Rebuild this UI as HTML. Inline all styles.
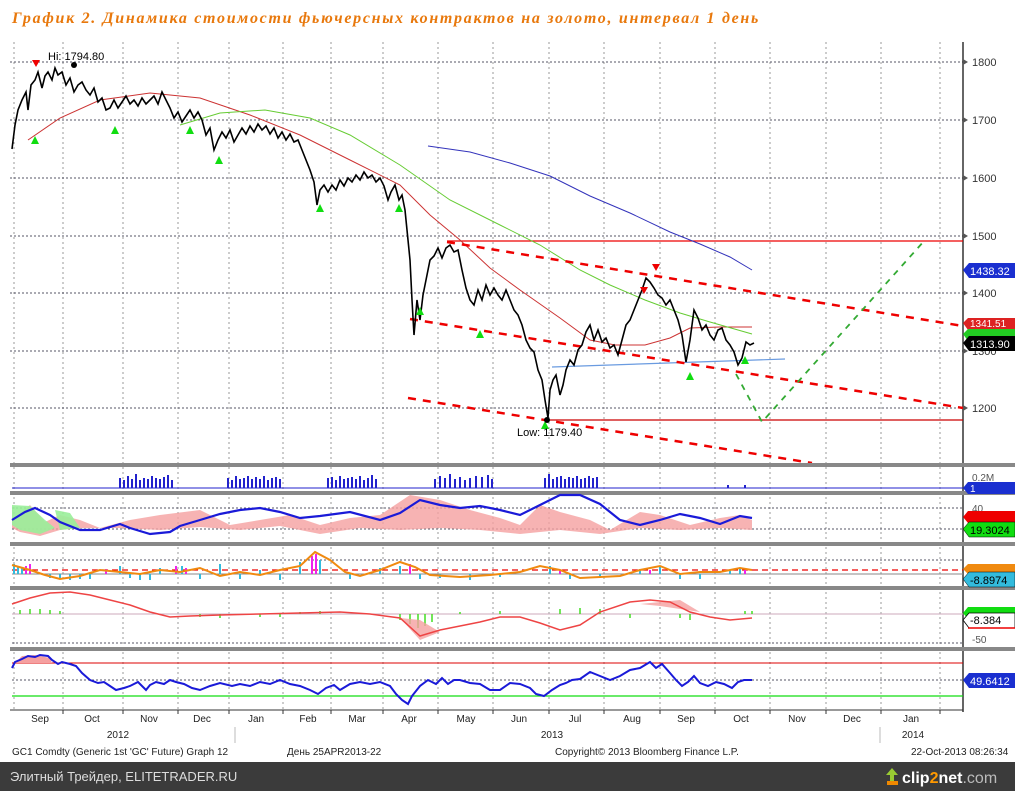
<!DOCTYPE html>
<html><head><meta charset="utf-8"><style>
html,body{margin:0;padding:0;background:#fff;}
svg{display:block;font-family:"Liberation Sans",sans-serif;}
</style></head><body>
<svg width="1015" height="791" viewBox="0 0 1015 791" xmlns="http://www.w3.org/2000/svg">
<rect width="1015" height="791" fill="#fff"/>
<text x="12" y="23" font-family="Liberation Serif,serif" font-style="italic" font-weight="bold" font-size="16" letter-spacing="1.7" fill="#e8780c">График 2.   Динамика стоимости фьючерсных контрактов на золото, интервал 1 день</text>

<g stroke="#999" stroke-dasharray="2,3" stroke-width="1">
<line x1="14" y1="42" x2="14" y2="710"/><line x1="63" y1="42" x2="63" y2="710"/><line x1="123" y1="42" x2="123" y2="710"/><line x1="178" y1="42" x2="178" y2="710"/><line x1="229" y1="42" x2="229" y2="710"/><line x1="283" y1="42" x2="283" y2="710"/><line x1="331" y1="42" x2="331" y2="710"/><line x1="383" y1="42" x2="383" y2="710"/><line x1="438" y1="42" x2="438" y2="710"/><line x1="493" y1="42" x2="493" y2="710"/><line x1="549" y1="42" x2="549" y2="710"/><line x1="604" y1="42" x2="604" y2="710"/><line x1="660" y1="42" x2="660" y2="710"/><line x1="715" y1="42" x2="715" y2="710"/><line x1="770" y1="42" x2="770" y2="710"/><line x1="826" y1="42" x2="826" y2="710"/><line x1="881" y1="42" x2="881" y2="710"/><line x1="940" y1="42" x2="940" y2="710"/>
</g>
<g stroke="#556" stroke-dasharray="2,2" stroke-width="1">
<line x1="10" y1="62" x2="963" y2="62"/><line x1="10" y1="120" x2="963" y2="120"/><line x1="10" y1="178" x2="963" y2="178"/><line x1="10" y1="236" x2="963" y2="236"/><line x1="10" y1="293" x2="963" y2="293"/><line x1="10" y1="351" x2="963" y2="351"/><line x1="10" y1="408" x2="963" y2="408"/>
</g>
<line x1="963" y1="42" x2="963" y2="712" stroke="#333" stroke-width="1.5"/>
<g font-size="11" fill="#333">
<text x="972" y="66">1800</text><text x="972" y="124">1700</text><text x="972" y="182">1600</text><text x="972" y="240">1500</text><text x="972" y="297">1400</text><text x="972" y="355">1300</text><text x="972" y="412">1200</text>
</g>
<g fill="#555"><path d="M963,59l5,3l-5,3z"/><path d="M963,117l5,3l-5,3z"/><path d="M963,175l5,3l-5,3z"/><path d="M963,233l5,3l-5,3z"/><path d="M963,290l5,3l-5,3z"/><path d="M963,348l5,3l-5,3z"/><path d="M963,405l5,3l-5,3z"/></g>

<line x1="447" y1="241" x2="963" y2="241" stroke="#e00" stroke-width="1.2"/>
<line x1="545" y1="420" x2="963" y2="420" stroke="#c00" stroke-width="1.2"/>
<polyline fill="none" stroke="#c33" stroke-width="1" points="28,140 60,118 100,100 150,93 200,98 250,115 300,135 350,160 400,185 430,215 460,240 490,268 520,290 560,318 590,340 615,345 645,345 670,338 690,328 720,327 752,327"/>
<polyline fill="none" stroke="#6c3" stroke-width="1" points="180,125 220,113 265,110 310,118 350,135 400,165 450,200 500,225 540,245 580,270 610,285 645,300 680,313 710,322 752,334"/>
<polyline fill="none" stroke="#33b" stroke-width="1" points="428,146 470,152 510,163 550,176 590,196 630,213 670,232 700,244 730,257 752,270"/>
<line x1="552" y1="367" x2="785" y2="359" stroke="#6a9be0" stroke-width="1.2"/>
<g stroke="#e00" stroke-width="2.5" stroke-dasharray="8,7" fill="none">
<line x1="447" y1="242" x2="963" y2="326"/>
<line x1="410" y1="319" x2="963" y2="408"/>
<line x1="408" y1="398" x2="812" y2="463"/>
</g>
<polyline fill="none" stroke="#3a3" stroke-width="1.8" stroke-dasharray="6,6" points="736,374 762,422 925,240"/>

<polyline fill="none" stroke="#000" stroke-width="1.6" points="12,149 15,125 18,110 22,100 26,92 28,110 31,85 35,80 38,72 42,88 45,76 48,72 52,80 55,68 58,75 62,72 66,85 70,78 74,92 78,85 82,82 86,90 90,95 94,88 98,102 102,98 106,110 110,108 114,100 118,108 122,102 126,96 130,104 134,100 138,106 142,98 146,104 150,100 154,96 158,104 162,92 166,100 170,108 174,118 178,112 182,122 186,116 190,110 194,118 198,112 202,120 206,135 210,128 214,150 218,140 222,132 226,138 230,130 234,142 238,135 242,128 246,134 250,126 254,132 258,124 262,130 266,126 270,134 274,128 278,138 282,132 286,140 290,134 294,142 298,140 302,150 306,160 310,170 314,182 317,205 320,190 324,185 328,192 332,185 336,190 340,180 344,186 348,178 352,182 356,175 360,180 364,172 368,178 372,175 376,182 380,178 384,186 388,200 391,192 395,185 399,200 402,195 405,210 408,240 410,260 412,300 414,335 417,300 420,320 423,295 426,280 430,260 434,256 438,248 442,258 446,248 450,245 454,252 458,250 462,270 466,288 470,300 474,305 478,290 482,300 486,285 490,295 494,288 498,295 502,300 506,290 510,300 514,310 518,315 522,325 526,340 530,348 534,352 538,370 542,380 545,400 548,418 550,390 553,380 556,375 560,395 563,385 566,370 570,360 574,365 578,350 582,345 586,332 590,325 594,340 598,330 602,342 606,338 610,348 614,345 618,355 622,340 626,325 630,320 634,310 638,300 642,290 646,278 650,282 654,288 658,295 662,298 666,305 670,300 674,310 678,320 682,335 686,362 690,340 694,310 698,318 702,330 706,325 710,335 714,340 718,330 722,328 726,340 730,345 734,352 738,365 742,358 746,342 750,345 754,343"/>
<g fill="#1d1">
<path d="M35,136l4,8h-8z"/><path d="M115,126l4,8h-8z"/><path d="M190,126l4,8h-8z"/><path d="M219,156l4,8h-8z"/><path d="M320,204l4,8h-8z"/><path d="M399,204l4,8h-8z"/><path d="M420,307l4,8h-8z"/><path d="M480,330l4,8h-8z"/><path d="M545,421l4,8h-8z"/><path d="M690,372l4,8h-8z"/><path d="M745,356l4,8h-8z"/>
</g>
<g fill="#e00"><path d="M32,60h8l-4,7z"/><path d="M640,287h8l-4,7z"/><path d="M652,264h8l-4,7z"/></g>
<circle cx="547" cy="420" r="3" fill="#000"/><circle cx="74" cy="65" r="3" fill="#000"/>
<text x="48" y="60" font-size="11" fill="#000">Hi: 1794.80</text>
<text x="517" y="436" font-size="11" fill="#000">Low: 1179.40</text>

<path d="M963,270l6,-7h46v15h-46z" fill="#1a2fd0"/><text x="970" y="275" font-size="11" fill="#fff">1438.32</text>
<path d="M963,323l5,-5h47v12h-47z" fill="#d22"/><text x="970" y="327" font-size="10" fill="#fff">1341.51</text>
<path d="M963,334l5,-5h47v12h-47z" fill="#2c2"/>
<path d="M963,343l6,-7h46v15h-46z" fill="#000"/><text x="970" y="348" font-size="11" fill="#fff">1313.90</text>

<g fill="#888">
<rect x="10" y="463" width="1005" height="4"/><rect x="10" y="491" width="1005" height="4"/><rect x="10" y="542" width="1005" height="4"/><rect x="10" y="586" width="1005" height="4"/><rect x="10" y="647" width="1005" height="4"/>
</g>
<line x1="12" y1="488" x2="963" y2="488" stroke="#22c" stroke-width="1"/>
<g stroke="#22c" stroke-width="2">
<path d="M120,488v-10M124,488v-8M128,488v-12M132,488v-9M136,488v-14M140,488v-8M144,488v-10M148,488v-9M152,488v-12M156,488v-10M160,488v-9M164,488v-11M168,488v-13M172,488v-8"/>
<path d="M228,488v-10M232,488v-8M236,488v-12M240,488v-9M244,488v-10M248,488v-12M252,488v-9M256,488v-11M260,488v-9M264,488v-12M268,488v-8M272,488v-10M276,488v-11M280,488v-9"/>
<path d="M328,488v-10M332,488v-11M336,488v-8M340,488v-12M344,488v-9M348,488v-10M352,488v-11M356,488v-9M360,488v-12M364,488v-8M368,488v-10M372,488v-13M376,488v-9"/>
<path d="M435,488v-9M440,488v-12M445,488v-10M450,488v-14M455,488v-9M460,488v-11M465,488v-8M470,488v-10M476,488v-12M482,488v-11M488,488v-13M492,488v-9"/>
<path d="M545,488v-10M549,488v-14M553,488v-9M557,488v-11M561,488v-12M565,488v-9M569,488v-11M573,488v-10M577,488v-12M581,488v-9M585,488v-10M589,488v-12M593,488v-10M597,488v-11"/>
<path d="M728,488v-3M745,488v-3"/>
</g>
<text x="972" y="481" font-size="10" fill="#555">0.2M</text>
<path d="M963,488l5,-6h47v12h-47z" fill="#1a2fd0"/><text x="970" y="492" font-size="10" fill="#fff">1</text>

<g stroke="#556" stroke-dasharray="2,2"><line x1="12" y1="508" x2="963" y2="508"/><line x1="12" y1="529" x2="963" y2="529"/></g>
<path d="M12,520 L30,505 45,522 60,515 80,520 100,528 130,520 160,515 200,510 230,525 260,520 290,515 320,525 350,518 380,515 410,495 440,500 470,510 500,518 520,525 540,505 560,512 590,520 610,530 640,512 660,515 690,525 720,518 740,515 752,520 L752,530 720,528 680,530 640,528 600,534 560,530 520,534 480,530 440,528 400,530 360,528 320,534 280,526 240,530 200,527 160,530 120,528 80,528 60,530 40,536 20,532 12,528Z" fill="#f5a0a0" opacity="0.8"/>
<path d="M12,505 L30,506 45,520 55,528 40,534 20,530 12,525Z M55,510 L70,513 80,528 60,530Z" fill="#9e9" opacity="0.9"/>
<polyline fill="none" stroke="#1a1ad8" stroke-width="2.2" points="12,520 25,512 35,508 50,515 60,522 80,530 100,530 120,524 130,528 150,534 170,532 180,526 200,520 220,514 240,510 260,508 280,512 300,518 320,516 350,512 380,520 400,513 420,500 440,505 460,508 480,506 500,510 520,515 540,505 560,495 580,495 600,504 620,520 640,525 660,520 680,514 700,518 720,524 740,516 752,518"/>
<text x="972" y="512" font-size="10" fill="#555">40</text>
<path d="M963,517l5,-6h47v12h-47z" fill="#e00"/>
<path d="M963,529l6,-7h46v15h-46z" fill="#1d1" stroke="#000" stroke-width=".5"/><text x="970" y="534" font-size="11" fill="#000">19.3024</text>

<g stroke="#556" stroke-dasharray="2,2"><line x1="12" y1="560" x2="963" y2="560"/></g>
<line x1="12" y1="570" x2="963" y2="570" stroke="#e00" stroke-width="1.3" stroke-dasharray="6,4"/>
<line x1="12" y1="574" x2="963" y2="574" stroke="#888" stroke-width="1"/>
<g stroke="#3bd" stroke-width="2">
<path d="M14,574v-10M18,574v-8M22,574v-6M50,574v4M60,574v5M70,574v6M80,574v5M90,574v5M120,574v-8M130,574v4M140,574v6M150,574v6M160,574v-6M182,574v-8M200,574v5M220,574v-10M240,574v5M260,574v-4M280,574v6M300,574v-12M320,574v-14M350,574v5M380,574v-6M400,574v-8M420,574v5M440,574v4M470,574v6M500,574v3M550,574v-8M570,574v5M600,574v4M640,574v-5M660,574v-8M680,574v5M700,574v5M730,574v-4M740,574v-6"/>
</g>
<g stroke="#e2e" stroke-width="2"><path d="M26,574v-8M30,574v-10M106,574v-5M176,574v-8M186,574v-6M312,574v-18M316,574v-20M410,574v-10M560,574v-4M650,574v-4M745,574v-4"/></g>
<polyline fill="none" stroke="#f08a10" stroke-width="2" points="12,565 30,570 45,575 60,579 80,576 100,570 120,572 140,574 160,570 180,572 200,568 220,576 240,572 260,575 280,570 300,566 315,552 330,560 345,572 360,576 380,570 400,562 415,567 430,575 460,577 490,575 520,572 540,566 560,570 580,578 600,577 620,576 640,570 660,566 680,574 700,572 720,572 740,568 752,570"/>
<path d="M963,569l5,-5h47v10h-47z" fill="#f08a10"/>
<path d="M963,579l6,-7h46v15h-46z" fill="#3bd" stroke="#000" stroke-width=".5"/><text x="970" y="584" font-size="11" fill="#000">-8.8974</text>

<line x1="12" y1="614" x2="963" y2="614" stroke="#cab" stroke-width="1"/>
<g stroke="#556" stroke-dasharray="2,2"><line x1="12" y1="643" x2="963" y2="643"/></g>
<g stroke="#4d2" stroke-width="1.5"><path d="M20,614v-4M30,614v-5M40,614v-5M50,614v-4M60,614v-3M200,614v3M220,614v4M260,614v3M280,614v3M300,614v-2M320,614v-3M400,614v6M410,614v10M418,614v14M425,614v12M432,614v8M460,614v-2M500,614v-3M560,614v-5M580,614v-6M600,614v-5M630,614v4M680,614v4M690,614v6M745,614v-3M752,614v-3"/></g>
<path d="M400,618 L420,640 440,632 420,620Z M640,604 L680,600 700,612 660,606Z" fill="#f5a0a0" opacity=".8"/>
<polyline fill="none" stroke="#e44" stroke-width="1.5" points="12,604 30,598 50,593 70,592 90,595 110,600 130,605 150,612 170,617 190,616 220,615 260,614 300,613 340,612 370,614 400,618 420,636 440,630 460,626 480,622 500,617 520,617 540,623 560,630 580,625 600,612 630,602 650,600 670,602 690,612 710,617 730,620 752,618"/>
<path d="M963,613l5,-6h47v12h-47z" fill="#1d1"/>
<path d="M963,620l6,-7h46v15h-46z" fill="#fff" stroke="#000" stroke-width=".8"/><line x1="968" y1="628" x2="1015" y2="628" stroke="#e00" stroke-width="1.5"/><text x="970" y="624" font-size="11" fill="#000">-8.384</text>
<text x="972" y="643" font-size="10" fill="#555">-50</text>

<line x1="12" y1="663" x2="963" y2="663" stroke="#d00" stroke-width="1"/>
<g stroke="#556" stroke-dasharray="2,2"><line x1="12" y1="680" x2="963" y2="680"/></g>
<line x1="12" y1="696" x2="963" y2="696" stroke="#1d1" stroke-width="1.2"/>
<path d="M15,663 L22,656 35,655 50,658 52,663Z" fill="#f5a0a0"/>
<polyline fill="none" stroke="#1a1ad8" stroke-width="2" points="12,668 15,662 22,659 28,656 35,657 40,655 48,656 52,660 58,664 62,662 70,664 76,666 82,673 90,680 98,683 104,682 110,686 116,690 124,688 130,686 138,682 146,690 150,685 156,682 164,684 170,680 176,682 184,684 192,688 200,690 210,686 220,683 232,686 240,684 250,686 260,682 270,684 280,680 290,684 300,686 310,690 318,694 326,688 334,685 340,690 350,684 360,682 370,684 380,682 390,686 396,694 402,700 408,704 412,696 420,686 428,680 436,684 442,678 448,684 454,680 460,680 470,683 480,684 490,690 500,690 510,683 520,684 530,688 536,694 544,696 552,690 560,685 566,683 572,680 580,679 590,672 600,676 610,680 620,676 630,670 640,668 650,662 656,668 662,664 670,673 676,680 682,686 688,682 694,676 700,683 708,686 716,682 724,684 732,688 738,682 744,680 752,680"/>
<path d="M963,680l6,-7h46v15h-46z" fill="#1a2fd0"/><text x="970" y="685" font-size="11" fill="#fff">49.6412</text>

<line x1="10" y1="710" x2="963" y2="710" stroke="#333" stroke-width="1"/>
<g stroke="#333"><path d="M63,710v4M123,710v4M178,710v4M229,710v4M283,710v4M331,710v4M383,710v4M438,710v4M493,710v4M549,710v4M604,710v4M660,710v4M715,710v4M770,710v4M826,710v4M881,710v4M940,710v4"/></g>
<g font-size="10" fill="#222" text-anchor="middle">
<text x="40" y="722">Sep</text><text x="92" y="722">Oct</text><text x="149" y="722">Nov</text><text x="202" y="722">Dec</text><text x="256" y="722">Jan</text><text x="308" y="722">Feb</text><text x="357" y="722">Mar</text><text x="409" y="722">Apr</text><text x="466" y="722">May</text><text x="519" y="722">Jun</text><text x="575" y="722">Jul</text><text x="632" y="722">Aug</text><text x="686" y="722">Sep</text><text x="741" y="722">Oct</text><text x="797" y="722">Nov</text><text x="852" y="722">Dec</text><text x="911" y="722">Jan</text>
<text x="118" y="738">2012</text><text x="552" y="738">2013</text><text x="913" y="738">2014</text>
</g>
<line x1="235" y1="727" x2="235" y2="743" stroke="#bbb"/><line x1="880" y1="727" x2="880" y2="743" stroke="#bbb"/>
<g font-size="10" fill="#222">
<text x="12" y="755">GC1 Comdty (Generic 1st 'GC' Future) Graph 12</text>
<text x="287" y="755">День 25APR2013-22</text>
<text x="555" y="755">Copyright© 2013 Bloomberg Finance L.P.</text>
<text x="911" y="755">22-Oct-2013 08:26:34</text>
</g>

<rect x="0" y="762" width="1015" height="29" fill="#3b3b3b"/>
<text x="10" y="781" font-size="13" fill="#ddd">Элитный Трейдер, ELITETRADER.RU</text>
<path d="M892,768l6,7h-4v6h-4v-6h-4z" fill="#9c3"/><rect x="887" y="781" width="11" height="4" fill="#e80"/>
<text x="902" y="783" font-size="16" font-weight="bold" fill="#fff">cl<tspan>ip</tspan><tspan fill="#f90">2</tspan>net<tspan font-weight="normal" fill="#bbb">.com</tspan></text>
</svg>
</body></html>
